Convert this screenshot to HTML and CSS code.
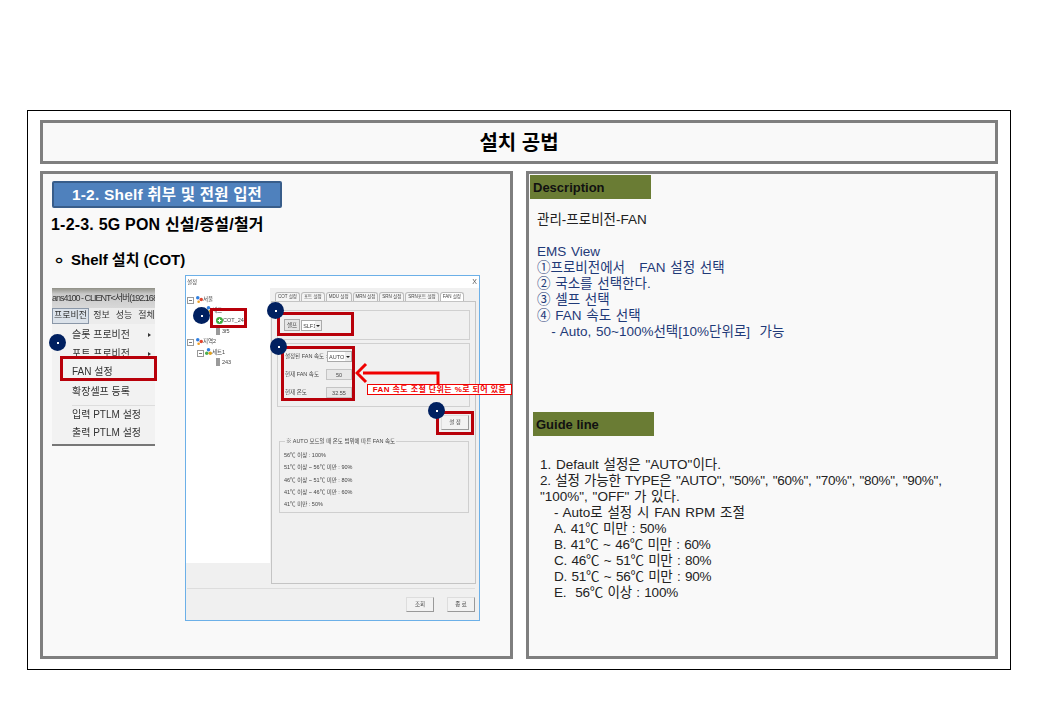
FILE: index.html
```html
<!DOCTYPE html>
<html lang="ko">
<head>
    <meta charset="UTF-8">
    <title>설치 공법</title>
    <link rel="stylesheet" href="styles.css">
</head>
<body>
    <div class="frame">
        <h1 class="title">설치 공법</h1>
        <div class="columns">

            <!-- Left panel -->
            <section class="panel">
                <h2 class="badge">1-2. Shelf 취부 및 전원 입전</h2>
                <h3 class="sub-title">1-2-3. 5G PON 신설/증설/철거</h3>
                <h3 class="bullet"><span class="bullet-mark">ㅇ</span>Shelf 설치 (COT)</h3>

                <div class="shots">
                    <!-- Menu capture -->
                    <div class="menu-shot">
                        <div class="menu-inner">
                            <div class="menu-title">ans4100 - CLIENT&lt;서버(192.168</div>
                            <div class="menu-bar"><span class="menu-active">프로비전</span><span>정보</span><span>성능</span><span>절체</span></div>
                            <ul class="menu-list">
                                <li>슬롯 프로비전<i class="caret"></i></li>
                                <li>포트 프로비전<i class="caret"></i></li>
                                <li>FAN 설정</li>
                                <li class="menu-gap">확장셀프 등록</li>
                                <li>입력 PTLM 설정</li>
                                <li>출력 PTLM 설정</li>
                            </ul>
                        </div>
                        <div class="red-box menu-box"></div>
                        <div class="dot menu-dot"></div>
                    </div>

                    <!-- Settings dialog capture -->
                    <div class="dialog-shot">
                        <div class="dialog">
                            <div class="dialog-title"><span>설정</span><span class="close">X</span></div>
                            <div class="dialog-body">
                                <ul class="tree">
                                    <li class="lvl-0 has-box"><svg class="node" viewBox="0 0 8 8"><circle cx="2" cy="2" r="2" fill="#2f7fe0"/><circle cx="6" cy="4" r="2" fill="#e0452f"/><circle cx="3" cy="6.5" r="1.5" fill="#f0a020"/></svg>서울</li>
                                    <li class="lvl-1"><svg class="node" viewBox="0 0 8 8"><circle cx="4" cy="2" r="2" fill="#2f7fe0"/><circle cx="2" cy="6" r="2" fill="#4caf50"/><circle cx="6" cy="6" r="2" fill="#e0a020"/></svg>세트</li>
                                    <li class="lvl-2 cot"><svg class="node" viewBox="0 0 8 8"><circle cx="4" cy="4" r="4" fill="#3fae3f"/><path d="M4 2v4M2 4h4" stroke="#fff" stroke-width="1.2"/></svg>COT_244</li>
                                    <li class="lvl-2"><i class="unit"></i>3f5</li>
                                    <li class="lvl-0 has-box"><svg class="node" viewBox="0 0 8 8"><circle cx="2" cy="2" r="2" fill="#2f7fe0"/><circle cx="6" cy="4" r="2" fill="#e0452f"/><circle cx="3" cy="6.5" r="1.5" fill="#f0a020"/></svg>지역2</li>
                                    <li class="lvl-1 has-box"><svg class="node" viewBox="0 0 8 8"><circle cx="4" cy="2" r="2" fill="#2f7fe0"/><circle cx="2" cy="6" r="2" fill="#4caf50"/><circle cx="6" cy="6" r="2" fill="#e0a020"/></svg>세트1</li>
                                    <li class="lvl-2"><i class="unit"></i>243</li>
                                </ul>
                                <div class="tab-area">
                                    <div class="tabs">
                                        <span>COT 설정</span><span>포트 설정</span><span>MDU 설정</span><span>MRN 설정</span><span>SRN 설정</span><span>SRN포트 설정</span><span class="tab-on">FAN 설정</span>
                                    </div>
                                    <div class="tab-page">
                                        <div class="group shelf-group">
                                            <span class="mini-btn">셀프</span><span class="select shelf-select">SLF1<i class="arrow-btn"></i></span>
                                        </div>
                                        <div class="group fan-group">
                                            <div class="fan-row"><span>설정된 FAN 속도 :</span><span class="select">AUTO<i class="arrow-btn"></i></span></div>
                                            <div class="fan-row"><span>현재 FAN 속도</span><span class="readout">50</span></div>
                                            <div class="fan-row"><span>현재 온도</span><span class="readout">32.55</span></div>
                                        </div>
                                        <div class="set-row"><span class="set-btn">설 정</span></div>
                                        <fieldset class="legend-group">
                                            <legend>※ AUTO 모드일 때 온도 범위에 따른 FAN 속도</legend>
                                            <p>56℃ 이상 : 100%</p>
                                            <p>51℃ 이상 ~ 56℃ 미만 : 90%</p>
                                            <p>46℃ 이상 ~ 51℃ 미만 : 80%</p>
                                            <p>41℃ 이상 ~ 46℃ 미만 : 60%</p>
                                            <p>41℃ 미만 : 50%</p>
                                        </fieldset>
                                    </div>
                                </div>
                            </div>
                            <div class="dialog-foot"><span class="set-btn">조회</span><span class="set-btn">종 료</span></div>
                        </div>

                        <!-- Callouts over the capture -->
                        <div class="red-box box-tree"></div>
                        <div class="red-box box-shelf"></div>
                        <div class="red-box box-fan"></div>
                        <div class="red-box box-set"></div>
                        <div class="dot dot-tree"></div>
                        <div class="dot dot-shelf"></div>
                        <div class="dot dot-fan"></div>
                        <div class="dot dot-set"></div>
                        <svg class="callout-arrow" width="90" height="26" viewBox="0 0 90 26">
                            <path d="M83 25V14H8" fill="none" stroke="#f00000" stroke-width="3"/>
                            <path d="M11 5L2 14l9 9" fill="none" stroke="#f00000" stroke-width="3"/>
                        </svg>
                        <div class="callout-note">FAN 속도 조절 단위는 %로 되어 있음</div>
                    </div>
                </div>
            </section>

            <!-- Right panel -->
            <section class="panel panel-right">
                <h4 class="tag">Description</h4>
                <div class="desc">
                    <p class="desc-head">관리-프로비전-FAN</p>
                    <div class="navy">
                        <p>EMS View</p>
                        <p>①프로비전에서&nbsp;&nbsp; FAN 설정 선택</p>
                        <p>② 국소를 선택한다.</p>
                        <p>③ 셀프 선택</p>
                        <p>④ FAN 속도 선택</p>
                        <p>&nbsp;&nbsp; - Auto, 50~100%선택[10%단위로]&nbsp; 가능</p>
                    </div>
                </div>
                <h4 class="tag tag-guide">Guide line</h4>
                <div class="guide">
                    <p>1. Default 설정은 "AUTO"이다.</p>
                    <p class="tight">2. 설정 가능한 TYPE은 "AUTO", "50%", "60%", "70%", "80%", "90%",</p>
                    <p>"100%", "OFF" 가 있다.</p>
                    <p class="indent">- Auto로 설정 시 FAN RPM 조절</p>
                    <p class="indent tight">A. 41℃ 미만 : 50%</p>
                    <p class="indent tight">B. 41℃ ~ 46℃ 미만 : 60%</p>
                    <p class="indent tight">C. 46℃ ~ 51℃ 미만 : 80%</p>
                    <p class="indent tight">D. 51℃ ~ 56℃ 미만 : 90%</p>
                    <p class="indent tight">E.&nbsp; 56℃ 이상 : 100%</p>
                </div>
            </section>
        </div>
    </div>
</body>
</html>
```

FILE: styles.css
```css
/* Basic reset */
* {
    margin: 0;
    padding: 0;
    box-sizing: border-box;
}

body {
    background-color: #fff;
    color: #000;
    font-family: "Liberation Sans", "Noto Sans CJK KR", sans-serif;
    padding: 110px 0 0 27px;
}

ul {
    list-style: none;
}

/* Page frame */
.frame {
    width: 984px;
    height: 560px;
    border: 1px solid #000;
    padding: 9px 12px 0;
}

.title {
    height: 44px;
    border: 3px solid #7f7f7f;
    background-color: #f9f9f9;
    font-size: 20px;
    font-weight: 700;
    line-height: 41px;
    text-align: center;
}

.columns {
    display: grid;
    grid-template-columns: 473px 472px;
    gap: 13px;
    margin-top: 7px;
}

.panel {
    height: 488px;
    border: 3px solid #7f7f7f;
    background-color: #f9f9f9;
    padding: 7px 9px;
}

/* Left panel headings */
.badge {
    width: 230px;
    height: 27px;
    background-color: #4f81bd;
    border: 2px solid #385d8a;
    border-radius: 2px;
    color: #fff;
    font-size: 15.5px;
    font-weight: 700;
    letter-spacing: 0.2px;
    line-height: 23px;
    text-align: center;
}

.sub-title {
    font-size: 16px;
    font-weight: 700;
    letter-spacing: 0.2px;
    line-height: 20px;
    margin: 7px 0 0 -1px;
}

.bullet {
    font-size: 15px;
    font-weight: 700;
    line-height: 20px;
    margin: 15px 0 0 2px;
}

.bullet-mark {
    font-size: 11px;
    display: inline-block;
    width: 17px;
}

/* Captures */
.shots {
    display: flex;
    align-items: flex-start;
    gap: 30px;
    margin-top: 4px;
}

.menu-shot {
    position: relative;
    width: 103px;
    height: 158px;
    margin-top: 13px;
    flex: none;
}

.menu-inner {
    width: 103px;
    height: 158px;
    overflow: hidden;
    background-color: #f2f2f2;
    border-bottom: 2px solid #777;
    font-size: 10px;
    color: #333;
    filter: blur(0.45px);
}

.menu-title {
    height: 20px;
    line-height: 20px;
    white-space: nowrap;
    background: linear-gradient(#8f8f86, #c9c9c9 30%, #d8d8d8);
    font-size: 9px;
    letter-spacing: -1px;
}

.menu-bar {
    display: flex;
    height: 16px;
    gap: 6px;
    font-size: 9px;
    line-height: 15px;
    background-color: #ececec;
    white-space: nowrap;
}

.menu-active {
    border: 1px solid #8a97a8;
    background-color: #dbe2ea;
    padding: 0 1px;
    margin-right: -2px;
    line-height: 13px;
}

.menu-list {
    padding: 2px 0 0 20px;
}

.menu-list li {
    position: relative;
    height: 18.6px;
    line-height: 18.6px;
    white-space: nowrap;
}

.menu-list .menu-gap {
    height: 24px;
    line-height: 19px;
    border-bottom: 1px solid #ddd;
}

.caret {
    position: absolute;
    right: 4px;
    top: 7px;
    border-left: 3px solid #333;
    border-top: 2.5px solid transparent;
    border-bottom: 2.5px solid transparent;
}

/* Red outlines and numbered dots */
.red-box {
    position: absolute;
    border: 3px solid #b8000a;
}

.dot {
    position: absolute;
    width: 17px;
    height: 17px;
    border-radius: 50%;
    background-color: #002060;
}

.dot::after {
    content: "";
    position: absolute;
    left: 7.5px;
    top: 7.5px;
    width: 2px;
    height: 2px;
    background-color: #fff;
}

.menu-box { left: 8px; top: 68px; width: 97px; height: 25px; }
.menu-dot { left: -3px; top: 46px; }

/* Settings dialog */
.dialog-shot {
    position: relative;
    width: 295px;
    height: 346px;
    flex: none;
}

.dialog {
    width: 295px;
    height: 346px;
    border: 1px solid #6cb0e8;
    background-color: #f0f0f0;
    font-size: 5.5px;
    color: #444;
    filter: blur(0.35px);
}

.dialog-title {
    display: flex;
    justify-content: space-between;
    height: 12px;
    line-height: 12px;
    background-color: #fff;
    padding: 0 2px 0 1px;
}

.close {
    font-size: 7px;
    color: #555;
}

.dialog-body {
    display: flex;
    height: 296px;
}

.tree {
    width: 84px;
    height: 275px;
    background-color: #fff;
    padding-top: 6px;
    flex: none;
}

.tree li {
    position: relative;
    display: flex;
    align-items: center;
    height: 10.5px;
    white-space: nowrap;
}

/* expander box next to a tree node */
.has-box::before {
    content: "";
    position: absolute;
    top: 3px;
    width: 5px;
    height: 5px;
    border: 1px solid #999;
    background: linear-gradient(#777, #777) center / 3px 1px no-repeat;
}

.lvl-0 { padding-left: 10px; }
.lvl-0.has-box::before { left: 1px; }
.lvl-1 { padding-left: 19px; }
.lvl-1.has-box::before { left: 11px; }
.lvl-2 { padding-left: 30px; }

.node {
    width: 7px;
    height: 7px;
    flex: none;
}

.unit {
    width: 4px;
    height: 8px;
    background-color: #9a9a9a;
    margin-right: 2px;
}

.tab-area {
    width: 205px;
    margin-left: 1px;
    padding-top: 4px;
}

.tabs {
    display: flex;
    gap: 1px;
    height: 9px;
    padding-left: 4px;
    font-size: 4.5px;
    line-height: 8px;
    white-space: nowrap;
}

.tabs span {
    border: 1px solid #bbb;
    border-bottom: none;
    border-radius: 3px 3px 0 0;
    padding: 0 2px;
    background-color: #f4f4f4;
}

.tabs .tab-on {
    background-color: #fff;
}

.tab-page {
    height: 283px;
    border: 1px solid #c4c4c4;
    padding: 8px 5px 0 5px;
}

.group {
    border: 1px solid #d0d0d0;
    width: 193px;
}

.shelf-group {
    display: flex;
    align-items: center;
    gap: 1px;
    height: 30px;
    padding-left: 6px;
}

.mini-btn {
    border: 1px solid #aaa;
    background-color: #e6e6e6;
    padding: 1px 2px;
}

.select {
    position: relative;
    display: inline-block;
    width: 21px;
    height: 11px;
    line-height: 10px;
    border: 1px solid #aaa;
    background-color: #fff;
    padding-left: 1px;
}

.shelf-select {
    width: 21px;
}

.arrow-btn {
    position: absolute;
    right: 0;
    top: 0;
    width: 6px;
    height: 9px;
    background-color: #eee;
}

.arrow-btn::after {
    content: "";
    position: absolute;
    left: 1px;
    top: 4px;
    border-top: 2.5px solid #222;
    border-left: 2px solid transparent;
    border-right: 2px solid transparent;
}

.fan-group {
    height: 64px;
    margin-top: 3px;
    padding: 3px 0 0 7px;
}

.fan-row {
    display: flex;
    align-items: center;
    justify-content: space-between;
    width: 67px;
    height: 18px;
    white-space: nowrap;
}

.fan-row .select {
    width: 26px;
}

.readout {
    width: 26px;
    height: 11px;
    line-height: 10px;
    text-align: center;
    border: 1px solid #c4c4c4;
    background-color: #e8e8e8;
}

.set-row {
    display: flex;
    justify-content: flex-end;
    padding: 8px 1px 0 0;
    height: 31px;
}

.set-btn {
    display: inline-block;
    width: 28px;
    height: 15px;
    line-height: 13px;
    text-align: center;
    border: 1px solid #ddd;
    border-right-color: #999;
    border-bottom-color: #999;
    background-color: #f2f2f2;
}

.legend-group {
    width: 190px;
    height: 75px;
    margin-left: 2px;
    border: 1px solid #cfcfcf;
    padding: 4px 4px 0;
}

.legend-group legend {
    font-size: 5.5px;
    line-height: 7px;
    padding: 0 1px;
    margin-left: 1px;
}

.legend-group p {
    line-height: 12.3px;
    white-space: nowrap;
}

.dialog-foot {
    display: flex;
    justify-content: flex-end;
    gap: 13px;
    height: 33px;
    margin: 4px 4px 0 1px;
    border-top: 1px solid #ddd;
    padding-top: 8px;
}

/* Positions on the dialog capture */
.box-tree { left: 25px; top: 33px; width: 37px; height: 20px; }
.box-shelf { left: 92px; top: 37px; width: 77px; height: 24px; }
.box-fan { left: 96px; top: 71px; width: 74px; height: 55px; }
.box-set { left: 251px; top: 136px; width: 38px; height: 24px; }
.dot-tree { left: 8px; top: 32px; }
.dot-shelf { left: 82px; top: 27px; }
.dot-fan { left: 85px; top: 63px; }
.dot-set { left: 243px; top: 127px; }

.callout-arrow {
    position: absolute;
    left: 170px;
    top: 84px;
}

.callout-note {
    position: absolute;
    left: 182px;
    top: 109px;
    width: 145px;
    height: 11px;
    border: 1px solid #f00000;
    background-color: #fff;
    color: #f00000;
    font-size: 8px;
    font-weight: 700;
    letter-spacing: 0.4px;
    line-height: 9px;
    text-align: center;
    white-space: nowrap;
}

/* Right panel */
.panel-right {
    padding: 1px 0 0 1px;
    font-size: 13.5px;
    line-height: 16px;
}

.tag {
    width: 121px;
    height: 24px;
    background-color: #6a7c34;
    color: #111;
    font-size: 13px;
    font-weight: 700;
    line-height: 25px;
    padding-left: 3px;
}

.tag-guide {
    margin: 0 0 0 3px;
}

.desc {
    height: 213px;
    padding: 13px 0 0 7px;
    word-spacing: 1px;
    color: #222;
}

.navy {
    margin-top: 16px;
    color: #1f3a78;
}

.guide {
    padding: 21px 0 0 10px;
    word-spacing: 1px;
    color: #222;
}

.indent {
    padding-left: 14px;
}

.tight {
    letter-spacing: -0.25px;
}
```
